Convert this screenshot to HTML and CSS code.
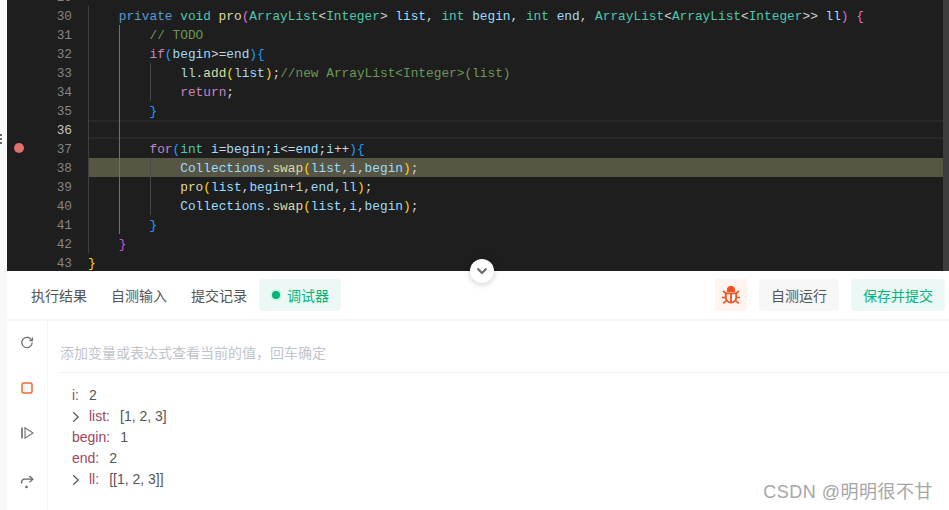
FILE: index.html
```html
<!DOCTYPE html>
<html lang="zh">
<head>
<meta charset="utf-8">
<title>调试器</title>
<link rel="stylesheet" href="styles.css">
</head>
<body>
<div class="page">
  <div class="strip"><span class="grip"></span></div>
  <main class="main">
    <section class="editor">
      <div class="code">
        <div class="ln"><span class="no">29</span><div class="txt"></div></div>
        <div class="ln"><span class="no">30</span><div class="txt"><i class="g"></i><b class="k">private</b> <b class="t">void</b> <b class="f">pro</b><b class="p">(</b><b class="t">ArrayList</b><b class="o">&lt;</b><b class="t">Integer</b><b class="o">&gt;</b> <b class="v">list</b><b class="o">,</b> <b class="t">int</b> <b class="v">begin</b><b class="o">,</b> <b class="t">int</b> <b class="v">end</b><b class="o">,</b> <b class="t">ArrayList</b><b class="o">&lt;</b><b class="t">ArrayList</b><b class="o">&lt;</b><b class="t">Integer</b><b class="o">&gt;&gt;</b> <b class="v">ll</b><b class="p">)</b> <b class="p">{</b></div></div>
        <div class="ln"><span class="no">31</span><div class="txt"><i class="g"></i><i class="g"></i><b class="c">// TODO</b></div></div>
        <div class="ln"><span class="no">32</span><div class="txt"><i class="g"></i><i class="g"></i><b class="m">if</b><b class="u">(</b><b class="v">begin</b><b class="o">&gt;=</b><b class="v">end</b><b class="u">)</b><b class="u">{</b></div></div>
        <div class="ln"><span class="no">33</span><div class="txt"><i class="g"></i><i class="g"></i><i class="g"></i><b class="v">ll</b><b class="o">.</b><b class="f">add</b><b class="y">(</b><b class="v">list</b><b class="y">)</b><b class="o">;</b><b class="c">//new ArrayList&lt;Integer&gt;(list)</b></div></div>
        <div class="ln"><span class="no">34</span><div class="txt"><i class="g"></i><i class="g"></i><i class="g"></i><b class="m">return</b><b class="o">;</b></div></div>
        <div class="ln"><span class="no">35</span><div class="txt"><i class="g"></i><i class="g"></i><b class="u">}</b></div></div>
        <div class="ln"><span class="no cur">36</span><div class="txt active"><i class="g"></i><i class="g"></i></div></div>
        <div class="ln"><span class="dot"></span><span class="no">37</span><div class="txt"><i class="g"></i><i class="g"></i><b class="m">for</b><b class="u">(</b><b class="t">int</b> <b class="v">i</b><b class="o">=</b><b class="v">begin</b><b class="o">;</b><b class="v">i</b><b class="o">&lt;=</b><b class="v">end</b><b class="o">;</b><b class="v">i</b><b class="o">++</b><b class="u">)</b><b class="u">{</b></div></div>
        <div class="ln"><span class="no">38</span><div class="txt hit"><i class="g"></i><i class="g"></i><i class="g"></i><b class="v">Collections</b><b class="o">.</b><b class="f">swap</b><b class="y">(</b><b class="v">list</b><b class="o">,</b><b class="v">i</b><b class="o">,</b><b class="v">begin</b><b class="y">)</b><b class="o">;</b></div></div>
        <div class="ln"><span class="no">39</span><div class="txt"><i class="g"></i><i class="g"></i><i class="g"></i><b class="f">pro</b><b class="y">(</b><b class="v">list</b><b class="o">,</b><b class="v">begin</b><b class="o">+</b><b class="n">1</b><b class="o">,</b><b class="v">end</b><b class="o">,</b><b class="v">ll</b><b class="y">)</b><b class="o">;</b></div></div>
        <div class="ln"><span class="no">40</span><div class="txt"><i class="g"></i><i class="g"></i><i class="g"></i><b class="v">Collections</b><b class="o">.</b><b class="f">swap</b><b class="y">(</b><b class="v">list</b><b class="o">,</b><b class="v">i</b><b class="o">,</b><b class="v">begin</b><b class="y">)</b><b class="o">;</b></div></div>
        <div class="ln"><span class="no">41</span><div class="txt"><i class="g"></i><i class="g"></i><b class="u">}</b></div></div>
        <div class="ln"><span class="no">42</span><div class="txt"><i class="g"></i><b class="p2">}</b></div></div>
        <div class="ln"><span class="no">43</span><div class="txt"><b class="y">}</b></div></div>
      </div>
      <div class="scroll"></div>
    </section>

    <button class="collapse" aria-label="收起">
      <svg width="12" height="8" viewBox="0 0 12 8"><path d="M1.5 1.5 6 6l4.500-4.500" fill="none" stroke="#6b6b6b" stroke-width="2.200"/></svg>
    </button>

    <nav class="tabs">
      <span class="tab">执行结果</span>
      <span class="tab">自测输入</span>
      <span class="tab">提交记录</span>
      <span class="tab on"><span class="live"></span>调试器</span>
      <span class="actions">
        <span class="btn bug">
          <svg width="20" height="20" viewBox="0 0 20 20" fill="none" stroke="#f2501e">
            <path d="M6.300 6.500V5a3.700 3.700 0 0 1 7.400 0v1.500z" fill="#f2501e" stroke-width="1"/>
            <path d="M4.800 8.300h10.400v4.200a5.200 5.200 0 0 1-10.400 0z" stroke-width="1.800"/>
            <path d="M10 8v9" stroke-width="1.800"/>
            <path d="M2 6l3 2.300M18 6l-3 2.300M1 12.500h4M19 12.500h-4M2.200 18.400l3.300-2.800M17.800 18.400l-3.300-2.800" stroke-width="1.600"/>
          </svg>
        </span>
        <span class="btn run">自测运行</span>
        <span class="btn save">保存并提交</span>
      </span>
    </nav>

    <section class="debug">
      <aside class="rail">
        <svg width="14" height="14" viewBox="0 0 14 14" fill="none" stroke="#666" stroke-width="1.200"><path d="M11.800 5.500A5.200 5.200 0 1 0 12.200 7.500"/><path d="M12.400 2.600v3.200H9.200" stroke-width="1.100"/></svg>
        <svg width="12" height="12" viewBox="0 0 12 12"><rect x="1" y="1" width="10" height="10" rx="1.500" fill="#fff5f0" stroke="#f2683c" stroke-width="1.500"/></svg>
        <svg class="cont" width="14" height="14" viewBox="0 0 14 14" fill="none" stroke="#777" stroke-width="1.200"><path d="M2 1.500v11" stroke-width="1.800"/><path d="M5 1.800 13 7l-8 5.200z"/></svg>
        <svg class="step" width="14" height="14" viewBox="0 0 14 14" fill="none" stroke="#666" stroke-width="1.300"><path d="M1.600 8.500V7.200A3 3 0 0 1 4.600 4.200h8"/><path d="M9.400 1 12.800 4.200 9.400 7.400"/><circle cx="6.500" cy="12" r="1.300" fill="#666" stroke="none"/></svg>
      </aside>
      <div class="watch">
        <div class="input">添加变量或表达式查看当前的值，回车确定</div>
        <ul class="vars">
          <li><span class="key">i:</span><span class="val">2</span></li>
          <li><svg class="arrow" width="8" height="12" viewBox="0 0 8 12"><path d="M1.200 1.200 6.200 6l-5 4.800" fill="none" stroke="#555" stroke-width="1.200"/></svg><span class="key">list:</span><span class="val">[1, 2, 3]</span></li>
          <li><span class="key">begin:</span><span class="val">1</span></li>
          <li><span class="key">end:</span><span class="val">2</span></li>
          <li><svg class="arrow" width="8" height="12" viewBox="0 0 8 12"><path d="M1.200 1.200 6.200 6l-5 4.800" fill="none" stroke="#555" stroke-width="1.200"/></svg><span class="key">ll:</span><span class="val">[[1, 2, 3]]</span></li>
        </ul>
      </div>
    </section>
    <div class="mark">CSDN @明明很不甘</div>
  </main>
</div>
</body>
</html>
```
FILE: styles.css
```css
* { box-sizing: border-box; }
html, body { margin: 0; height: 100%; background: #fff; overflow: hidden; }
.page { display: flex; width: 949px; height: 510px; overflow: hidden; font-family: "Liberation Sans", "Noto Sans CJK SC", sans-serif; }
.strip { width: 7px; flex: none; background: #f7f8fa; position: relative; }
.grip { position: absolute; left: 0; top: 134px; width: 2px; height: 2px; background: #666; box-shadow: 0 4px 0 #666, 0 8px 0 #666; }
.main { flex: 1; min-width: 0; display: flex; flex-direction: column; position: relative; }

.editor { height: 271px; flex: none; background: #1e1e1e; display: flex; overflow: hidden; }
.code { flex: 1; min-width: 0; margin-top: -13px; font: 12.8px/21px "Liberation Mono", "DejaVu Sans Mono", monospace; }
.scroll { width: 6px; flex: none; background: #3d3d3d; }
.ln { display: flex; height: 19px; position: relative; }
.no { width: 65px; flex: none; text-align: right; color: #858585; margin-right: 16px; }
.no.cur { color: #c6c6c6; }
.txt { flex: 1; min-width: 0; white-space: pre; color: #d4d4d4; }
.txt b { font-weight: 400; }
.txt.active { box-shadow: inset 0 2px 0 #282828, inset 0 -2px 0 #282828; }
.txt.hit { background: #575645; }
.g { display: inline-block; vertical-align: top; width: 30.75px; height: 19px; border-left: 1px solid #404040; }
.g + .g { border-left-color: #707070; }
.g + .g + .g { border-left-color: #484848; }
.dot { position: absolute; left: 7px; top: 4px; width: 10px; height: 10px; border-radius: 50%; background: #e07070; }
.k { color: #569cd6; }
.t { color: #4ec9b0; }
.f { color: #dcdcaa; }
.v { color: #9cdcfe; }
.o { color: #d4d4d4; }
.c { color: #6a9955; }
.m { color: #c586c0; }
.n { color: #b5cea8; }
.p { color: #da70d6; }
.p2 { color: #d14fd6; }
.u { color: #179fff; }
.y { color: #ffd700; }

.collapse { position: absolute; left: 463px; top: 259px; width: 24px; height: 24px; padding: 0; border: 0; border-radius: 50%; background: #fff; box-shadow: 0 1px 6px rgba(0,0,0,.22); display: flex; align-items: center; justify-content: center; }

.tabs { height: 50px; flex: none; display: flex; align-items: flex-start; padding: 8px 4px 0 12px; border-bottom: 2px solid #f6f6f6; font-size: 14px; font-family: "Noto Sans CJK SC", sans-serif; color: #555; }
.tab { height: 32px; line-height: 32px; padding: 0 12px; white-space: nowrap; }
.tab.on { display: flex; align-items: center; padding: 0 12px 0 13px; border-radius: 4px; background: #ebf8f5; color: #00b578; }
.live { width: 8px; height: 8px; border-radius: 50%; background: #00b578; box-shadow: 0 0 0 2px #d5f1e6; margin-right: 7px; }
.actions { margin-left: auto; display: flex; gap: 12px; }
.btn { height: 32px; line-height: 32px; border-radius: 4px; white-space: nowrap; display: flex; align-items: center; justify-content: center; }
.bug { width: 32px; background: #fff4f0; border-radius: 0; }
.run { width: 80px; background: #f7f7f7; }
.save { width: 94px; background: #ebf8f5; color: #00b578; }

.debug { flex: 1; min-height: 0; display: flex; }
.rail { width: 41px; flex: none; border-right: 1px solid #f5f5f5; display: flex; flex-direction: column; align-items: center; padding: 14px 0 0 0; gap: 33px; }
.rail svg { display: block; }
.rail .cont { margin-top: -1px; }
.rail .step { margin-top: 2px; }
.watch { flex: 1; min-width: 0; padding: 0 0 0 12px; }
.input { height: 52px; padding-top: 21px; line-height: 20px; font-size: 14px; font-family: "Noto Sans CJK SC", sans-serif; color: #c0c4cc; border-bottom: 1px solid #f2f2f2; white-space: nowrap; }
.vars { list-style: none; margin: 12px 0 0; padding: 0 0 0 12px; font-size: 14px; line-height: 21px; }
.vars li { display: flex; align-items: center; height: 21px; white-space: nowrap; }
.arrow { flex: none; margin-right: 9px; }
.key { color: #a1445c; margin-right: 10px; }
.val { color: #555; }

.mark { position: absolute; right: 16px; bottom: 6px; font-size: 18px; line-height: 24px; letter-spacing: .5px; color: #a6a6a6; font-family: "Liberation Sans", "Noto Sans CJK SC", sans-serif; white-space: nowrap; }
```
